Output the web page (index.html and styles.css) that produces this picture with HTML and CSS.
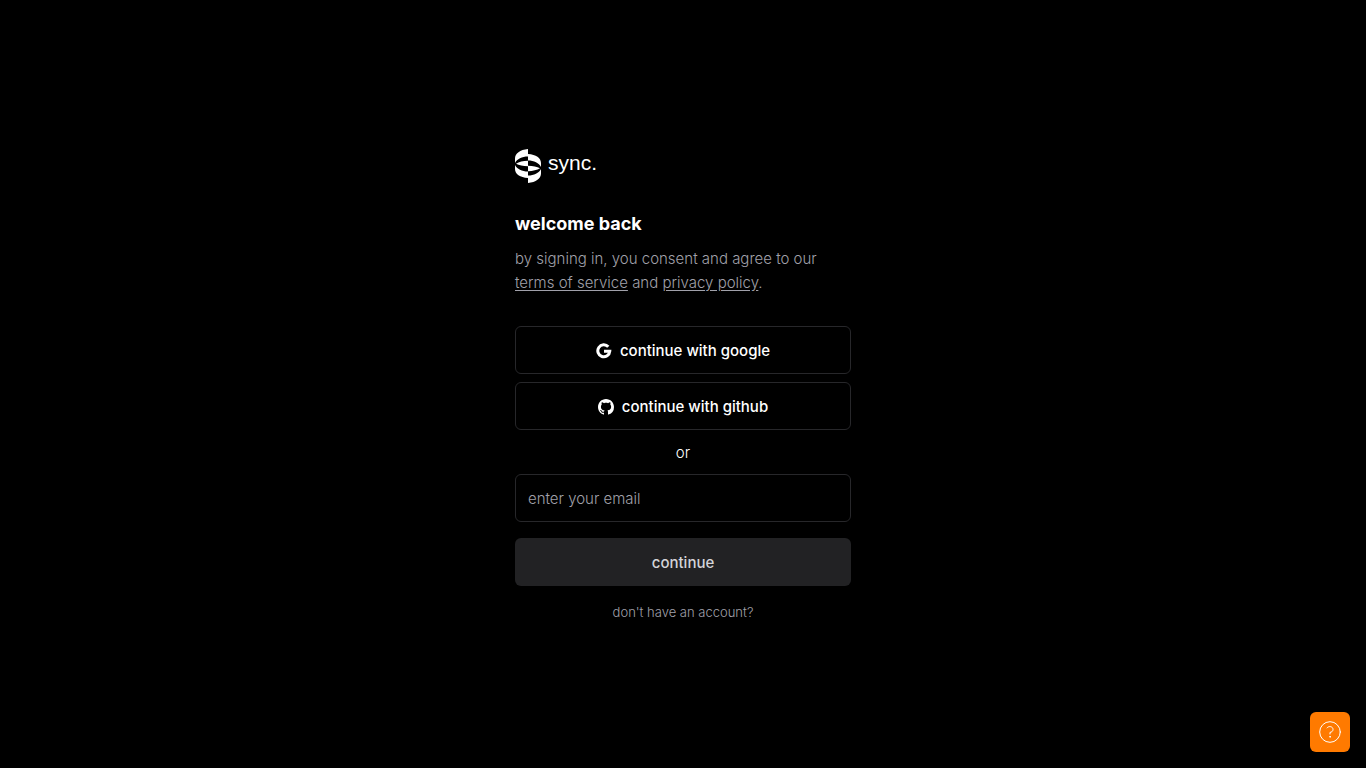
FILE: index.html
```html
<!DOCTYPE html>
<html lang="en">
<head>
  <meta charset="UTF-8" />
  <meta name="viewport" content="width=device-width, initial-scale=1.0"/>
  <title>sync. | sign in</title>
  <link rel="stylesheet" href="styles.css">
</head>
<body>
  <main class="login">
    <a class="logo" href="#">
      <svg class="logo-mark" viewBox="0 0 26 34" fill="currentColor" aria-hidden="true">
        <path d="M13 0C5 .8 0 4.500 0 9.500V14C2 10 7 7.500 13 7.500Z"/>
        <path d="M13 5C21 5.500 26 9 26 14V18C24 14 19 11.500 13 11.500Z"/>
        <path d="M13 11.800C8 11.800 4 13 1 14.700C4 16.300 8 17.200 13 17.200Z"/>
        <path d="M13 34C21 33.200 26 29.500 26 24.500V20C24 24 19 26.500 13 26.500Z"/>
        <path d="M13 29C5 28.500 0 25 0 20V16C2 20 7 22.500 13 22.500Z"/>
        <path d="M13 22.200C18 22.200 22 21 25 19.300C22 17.700 18 16.800 13 16.800Z"/>
      </svg>
      <span class="logo-text">sync.</span>
    </a>

    <h1>welcome back</h1>
    <p class="terms">by signing in, you consent and agree to our <a href="#">terms of service</a> and <a href="#">privacy policy</a>.</p>

    <!-- social sign in -->
    <div class="providers">
      <button class="btn" type="button">
        <svg class="icon" viewBox="0 0 16 16" fill="none" stroke="currentColor" stroke-width="3" aria-hidden="true">
          <path d="M12.300 3.800A6 6 0 1 0 13.800 8.200H8"/>
        </svg>
        continue with google
      </button>
      <button class="btn" type="button">
        <svg class="icon" viewBox="0 0 16 16" fill="currentColor" aria-hidden="true">
          <path d="M8 0C3.580 0 0 3.580 0 8c0 3.540 2.290 6.530 5.470 7.590.4.070.55-.17.55-.38 0-.19-.01-.82-.01-1.490-2.010.37-2.530-.49-2.690-.94-.09-.23-.48-.94-.82-1.130-.28-.15-.68-.52-.01-.53.63-.01 1.080.58 1.230.82.72 1.210 1.870.87 2.330.66.07-.52.28-.87.51-1.070-1.780-.2-3.640-.89-3.640-3.950 0-.87.31-1.590.82-2.150-.08-.2-.36-1.020.08-2.120 0 0 .67-.21 2.200.82.64-.18 1.320-.27 2-.27s1.360.09 2 .27c1.530-1.040 2.200-.82 2.200-.82.44 1.100.16 1.920.08 2.120.51.56.82 1.270.82 2.150 0 3.070-1.870 3.750-3.650 3.950.29.25.54.73.54 1.480 0 1.070-.01 1.930-.01 2.200 0 .21.15.46.55.38A8.010 8.010 0 0 0 16 8c0-4.420-3.580-8-8-8Z"/>
        </svg>
        continue with github
      </button>
    </div>

    <p class="or">or</p>

    <!-- email sign in -->
    <form class="email-form">
      <input class="email" type="email" placeholder="enter your email" aria-label="email">
      <button class="btn btn-submit" type="submit">continue</button>
    </form>

    <a class="signup" href="#">don't have an account?</a>
  </main>

  <button class="help" type="button" aria-label="help">
    <svg viewBox="0 0 24 24" fill="none" stroke="currentColor" stroke-linecap="round" aria-hidden="true">
      <circle cx="12" cy="12" r="10.300"/>
      <path d="M9 7.900C9.800 6.900 10.900 6.500 12.200 6.600C14 6.800 15.100 8 15 9.600C14.900 11.400 13.600 12.100 12 12.400V14"/>
      <circle cx="12" cy="16.800" r=".4" fill="currentColor"/>
    </svg>
  </button>
</body>
</html>
```

FILE: styles.css
```css
* {
  box-sizing: border-box;
}

body {
  margin: 0;
  min-height: 100vh;
  display: flex;
  justify-content: center;
  align-items: center;
  background-color: #000;
  color: #fff;
  font-family: Inter, "Open Sans", sans-serif;
  font-size: 15px;
  line-height: 24px;
}

.login {
  width: 100%;
  max-width: 336px;
  display: flex;
  flex-direction: column;
}

/* logo */
.logo {
  display: flex;
  align-items: center;
  align-self: flex-start;
  gap: 7px;
  color: #fff;
  text-decoration: none;
}

.logo-mark {
  width: 26px;
  height: 34px;
}

.logo-text {
  font-family: "Liberation Sans", Arial, sans-serif;
  font-size: 21px;
  line-height: 28px;
  padding-bottom: 6px;
}

h1 {
  margin: 27px 0 9px;
  font-size: 18px;
  line-height: 28px;
  font-weight: 700;
}

.terms {
  margin: 0 0 31px;
  color: #a1a1aa;
  font-weight: 300;
}

.terms a {
  color: inherit;
  text-underline-offset: 2px;
}

/* buttons */
.providers {
  display: flex;
  flex-direction: column;
  gap: 8px;
}

.btn {
  display: flex;
  justify-content: center;
  align-items: center;
  gap: 8px;
  height: 48px;
  padding: 2px 12px 0;
  border: 1px solid #27272a;
  border-radius: 6px;
  background-color: transparent;
  color: #fff;
  font: inherit;
  font-weight: 500;
  cursor: pointer;
}

.icon {
  width: 16px;
  height: 16px;
}

.or {
  margin: 11px 0 9px;
  text-align: center;
  font-weight: 300;
}

/* email form */
.email-form {
  display: flex;
  flex-direction: column;
  gap: 16px;
}

.email {
  height: 48px;
  padding: 2px 12px 0;
  border: 1px solid #27272a;
  border-radius: 6px;
  background-color: transparent;
  color: #fff;
  font: inherit;
  font-weight: 300;
}

.email::placeholder {
  color: #a1a1aa;
}

.btn-submit {
  border: none;
  background-color: #222224;
  color: #d4d4d8;
}

.signup {
  align-self: center;
  margin-top: 18px;
  color: #a1a1aa;
  font-size: 13px;
  line-height: 16px;
  font-weight: 300;
  text-decoration: none;
}

/* help button in the corner */
.help {
  position: fixed;
  right: 16px;
  bottom: 16px;
  width: 40px;
  height: 40px;
  display: flex;
  justify-content: center;
  align-items: center;
  padding: 0;
  border: none;
  border-radius: 6px;
  background-color: #ff7a00;
  color: #fff;
  cursor: pointer;
}

.help svg {
  width: 24px;
  height: 24px;
}
```
